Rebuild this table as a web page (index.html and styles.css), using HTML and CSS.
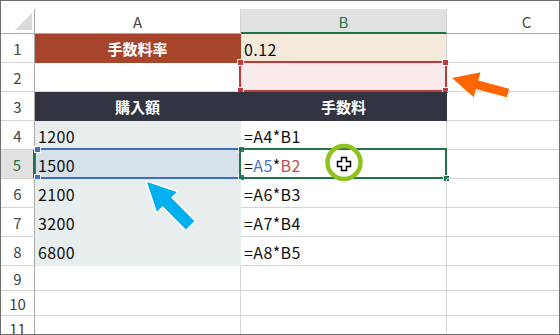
FILE: index.html
```html
<!DOCTYPE html>
<html lang="ja">
<head>
<meta charset="utf-8">
<link rel="stylesheet" href="styles.css">
</head>
<body>
<div class="sheet">
  <div class="grid">
    <div class="corner"><span class="tri"></span></div>
    <div class="colhead">A</div>
    <div class="colhead sel">B</div>
    <div class="colhead">C</div>

    <div class="rowhead">1</div>
    <div class="cell brown title">手数料率</div>
    <div class="cell cream">0.12</div>
    <div class="cell"></div>

    <div class="rowhead">2</div>
    <div class="cell"></div>
    <div class="cell pink"><span class="box red"><i class="h tl"></i><i class="h tr"></i><i class="h bl"></i><i class="h br"></i></span></div>
    <div class="cell"></div>

    <div class="rowhead">3</div>
    <div class="cell dark title">購入額</div>
    <div class="cell dark title">手数料</div>
    <div class="cell"></div>

    <div class="rowhead">4</div>
    <div class="cell light">1200</div>
    <div class="cell">=A4*B1</div>
    <div class="cell"></div>

    <div class="rowhead cur">5</div>
    <div class="cell active">1500<span class="box blue"><i class="h tl"></i><i class="h tr"></i><i class="h bl"></i><i class="h br"></i></span></div>
    <div class="cell">=<span class="ref-a">A5</span>*<span class="ref-b">B2</span><span class="box green"><i class="fill"></i></span></div>
    <div class="cell"></div>

    <div class="rowhead">6</div>
    <div class="cell light">2100</div>
    <div class="cell">=A6*B3</div>
    <div class="cell"></div>

    <div class="rowhead">7</div>
    <div class="cell light">3200</div>
    <div class="cell">=A7*B4</div>
    <div class="cell"></div>

    <div class="rowhead">8</div>
    <div class="cell light">6800</div>
    <div class="cell">=A8*B5</div>
    <div class="cell"></div>

    <div class="rowhead">9</div>
    <div class="cell"></div>
    <div class="cell"></div>
    <div class="cell"></div>

    <div class="rowhead">10</div>
    <div class="cell"></div>
    <div class="cell"></div>
    <div class="cell"></div>

    <div class="rowhead">11</div>
    <div class="cell"></div>
    <div class="cell"></div>
    <div class="cell"></div>
  </div>

  <svg class="overlay" width="560" height="335" viewBox="0 0 560 335">
    <polygon points="0,0 26,-13 26,-4.5 58,-4.5 58,4.5 26,4.5 26,13" fill="#ff6600" transform="translate(452,78) rotate(15)"/>
    <polygon points="0,0 28,-14 28,-6 61,-6 61,6 28,6 28,14" fill="#00b0f0" stroke="#ffffff" stroke-width="3" stroke-linejoin="round" paint-order="stroke" transform="translate(147,182) rotate(45)"/>
    <circle cx="344" cy="162.5" r="16.5" fill="none" stroke="#8dc21f" stroke-width="4.5"/>
    <polygon points="-2.5,-6.5 2.5,-6.5 2.5,-2.5 6.5,-2.5 6.5,2.5 2.5,2.5 2.5,6.5 -2.5,6.5 -2.5,2.5 -6.5,2.5 -6.5,-2.5 -2.5,-2.5" fill="#ffffff" stroke="#000000" stroke-width="1.5" stroke-linejoin="miter" transform="translate(344,164)"/>
  </svg>
</div>
</body>
</html>
```

FILE: styles.css
```css
html, body {
  margin: 0;
  padding: 0;
  background: #ffffff;
}

.sheet {
  position: relative;
  width: 560px;
  height: 335px;
  box-sizing: border-box;
  border: 1px solid #6e6e6e;
  padding-top: 8px;
  overflow: hidden;
  background: #ffffff;
  font-family: "Noto Sans CJK JP", "Noto Sans", sans-serif;
}

.grid {
  display: grid;
  grid-template-columns: 34px 206px 206px 160px;
  grid-template-rows: 25px repeat(8, 29px) 25px 25px 25px;
}

.grid > div {
  box-sizing: border-box;
  border-right: 1px solid #d4d4d4;
  border-bottom: 1px solid #d4d4d4;
  display: flex;
  align-items: center;
  position: relative;
}

.corner {
  border-right-color: #ababab !important;
  border-bottom-color: #ababab !important;
}

.tri {
  position: absolute;
  left: 14px;
  top: 4px;
  width: 0;
  height: 0;
  border-left: 17px solid transparent;
  border-bottom: 17px solid #dadada;
}

.colhead {
  justify-content: center;
  font-size: 15px;
  color: #444444;
  border-bottom-color: #ababab !important;
  padding-top: 1px;
}

.colhead.sel {
  background: #e1e1e1;
  color: #217346;
  border-bottom: 2px solid #217346 !important;
}

.rowhead {
  justify-content: center;
  font-size: 15px;
  color: #444444;
  border-right-color: #ababab !important;
  padding-top: 1px;
}

.rowhead.cur {
  background: #e1e1e1;
  color: #217346;
  border-right: 2px solid #217346 !important;
}

.cell {
  font-size: 16px;
  letter-spacing: 0.4px;
  color: #111111;
  padding-left: 3px;
  padding-top: 2px;
  white-space: nowrap;
}

.title {
  justify-content: center;
  font-weight: bold;
  color: #ffffff !important;
  font-size: 15px;
  letter-spacing: 0;
  padding-left: 0;
  padding-top: 0;
}

.brown {
  background: #a6452b;
  border-color: #a6452b !important;
}

.cream {
  background: #f5e9d9;
}

.pink {
  background: #f9ebeb;
}

.dark {
  background: #323442;
  border-color: #323442 !important;
}

.light {
  background: #e8eeee;
  border-color: #e8eeee !important;
}

.active {
  background: #d7e1e9;
  border-right-color: #d7e1e9 !important;
}

.ref-a {
  color: #4472c4;
}

.ref-b {
  color: #c0504d;
}

.box {
  position: absolute;
  box-sizing: border-box;
  top: -2px;
  left: -2px;
  right: -1px;
  bottom: -1px;
}

.box.red {
  border: 2px solid #c0383c;
}

.box.blue {
  left: 0;
  border-top: 2px solid #3a6fc4;
  border-bottom: 2px solid #3a6fc4;
  border-left: 1px solid #3a6fc4;
}

.box.green {
  border: 2px solid #217346;
}

.h {
  position: absolute;
  width: 5px;
  height: 5px;
  border: 1px solid #ffffff;
}

.red .h {
  background: #c0383c;
}

.blue .h {
  background: #3a6fc4;
}

.h.tl { left: -4px; top: -4px; }
.h.tr { right: -4px; top: -4px; }
.h.bl { left: -4px; bottom: -4px; }
.h.br { right: -4px; bottom: -4px; }

.blue .h.tl, .blue .h.bl { left: -2px; }

.fill {
  position: absolute;
  right: -5px;
  bottom: -5px;
  width: 5px;
  height: 5px;
  background: #217346;
  border: 1px solid #ffffff;
}

.overlay {
  position: absolute;
  left: -1px;
  top: -1px;
  pointer-events: none;
}
```
